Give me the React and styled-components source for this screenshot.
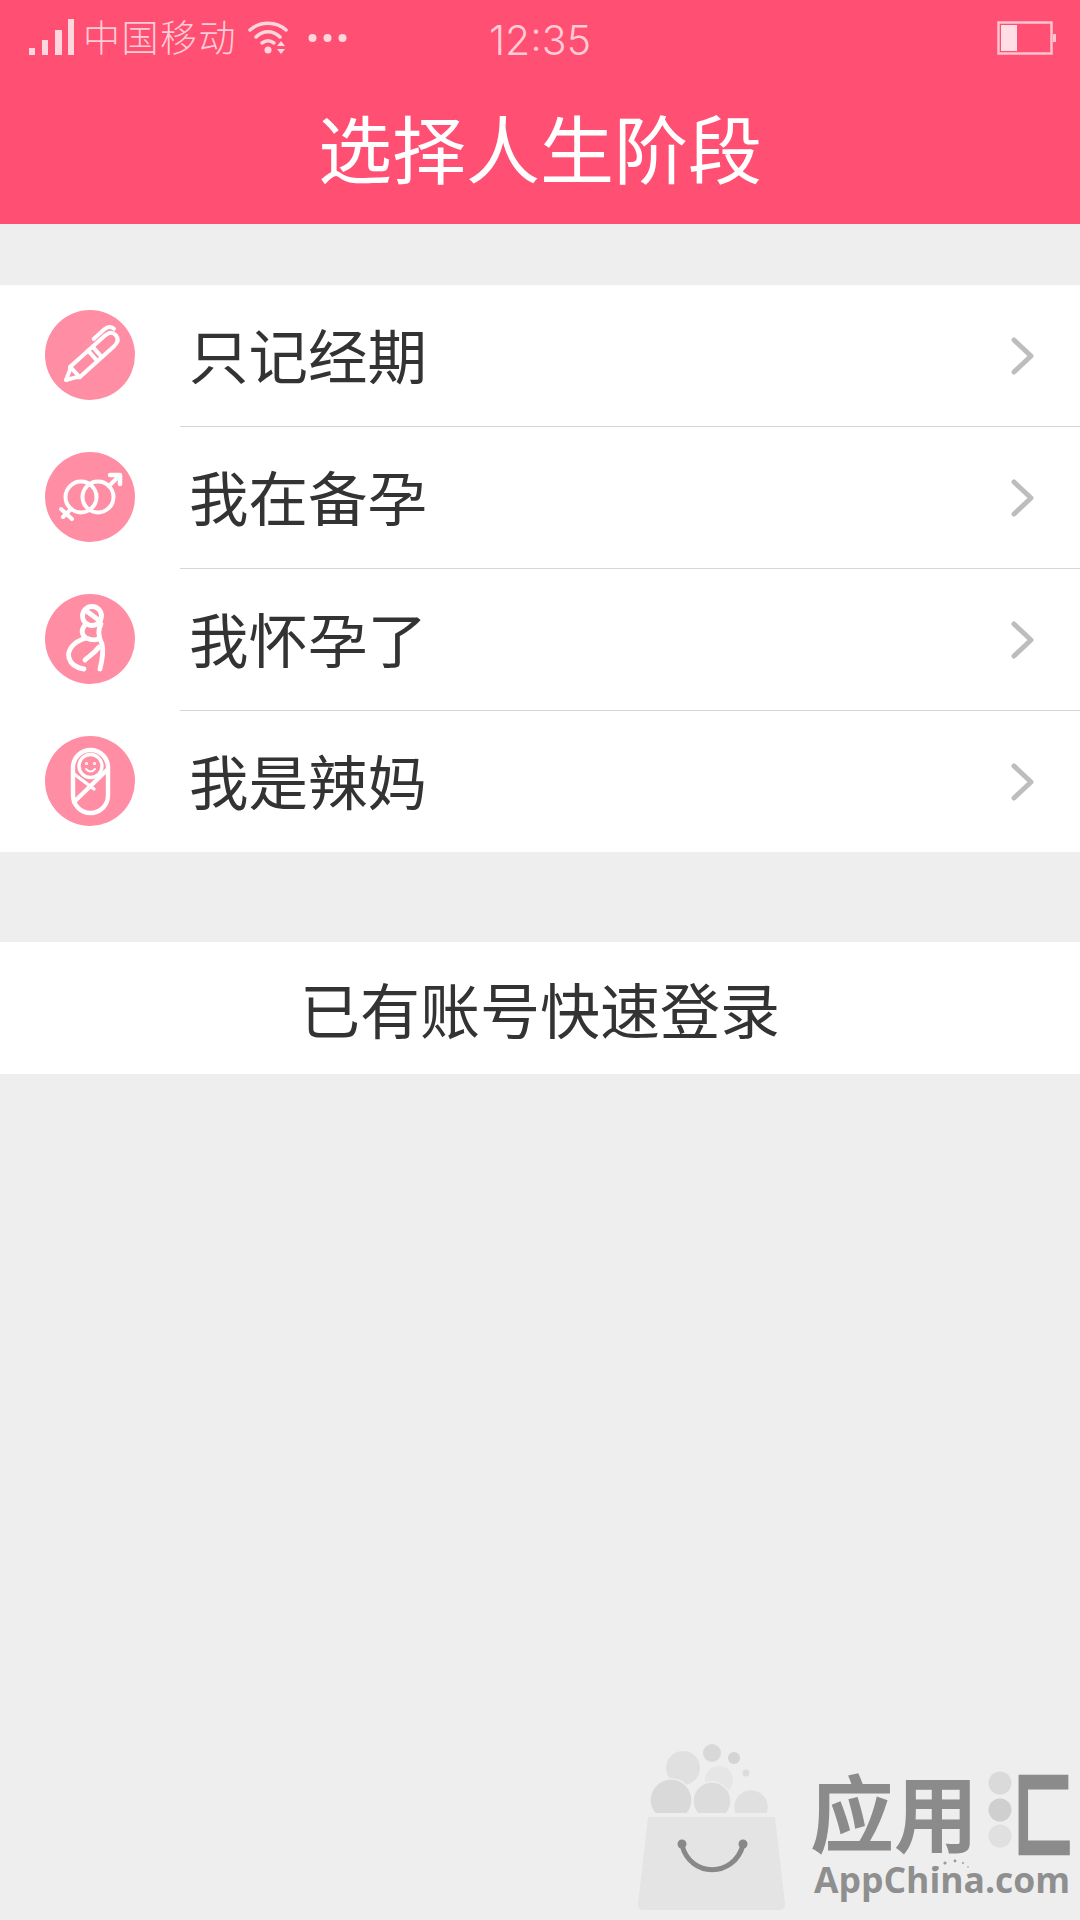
import React from 'react';
import styled, { createGlobalStyle } from 'styled-components';

const CJK = '"Noto Sans CJK SC", "Noto Sans", sans-serif';

const Global = createGlobalStyle`
  html, body { margin: 0; padding: 0; background: #eeeeee; }
  * { box-sizing: border-box; }
`;

const Page = styled.div`
  position: relative;
  width: 1080px;
  height: 1920px;
  overflow: hidden;
  background: #eeeeee;
  font-family: ${CJK};
  color: #333333;
`;

const Header = styled.header`
  height: 224px;
  background: #ff4f72;
  display: flex;
  flex-direction: column;
`;

const StatusBar = styled.div`
  position: relative;
  height: 76px;
  display: flex;
  align-items: center;
  padding-left: 28px;
  color: #ffcbd6;
`;

const Carrier = styled.span`
  margin-left: 8px;
  font-size: 37px;
  font-weight: 300;
  line-height: 1;
  letter-spacing: 1.5px;
  position: relative;
  top: -2px;
`;

const Wifi = styled.svg`
  margin-left: 10px;
  display: block;
`;

const Dots = styled.svg`
  margin-left: 17px;
  display: block;
`;

const Clock = styled.span`
  position: absolute;
  left: 0;
  right: 0;
  top: 15px;
  text-align: center;
  font-family: Inter, "Liberation Sans", sans-serif;
  font-weight: 300;
  font-size: 41px;
  line-height: 50px;
`;

const Battery = styled.svg`
  margin-left: auto;
  margin-right: 23px;
  display: block;
`;

const Title = styled.h1`
  margin: 0;
  flex: 1;
  display: flex;
  align-items: center;
  justify-content: center;
  color: #ffffff;
  font-size: 74px;
  font-weight: 400;
  line-height: 1;
  padding-bottom: 8px;
`;

const List = styled.ul`
  list-style: none;
  margin: 61px 0 0;
  padding: 0;
  background: #ffffff;
`;

const Row = styled.li`
  height: 142px;
  display: flex;
  align-items: center;
  padding-left: 45px;
  padding-right: 45px;
  position: relative;
  &:last-child { height: 141px; }
  &:not(:last-child)::after {
    content: '';
    position: absolute;
    left: 180px;
    right: 0;
    bottom: 0;
    height: 1px;
    background: #d6d6d6;
  }
`;

const Badge = styled.span`
  width: 90px;
  height: 90px;
  border-radius: 50%;
  background: #ff8da3;
  flex: none;
  display: block;
  margin-bottom: 2px;
`;

const Label = styled.span`
  margin-left: 54px;
  margin-bottom: 4px;
  font-size: 59.5px;
  font-weight: 400;
  line-height: 1;
  flex: 1;
`;

const Login = styled.div`
  margin-top: 90px;
  height: 132px;
  background: #ffffff;
  display: flex;
  align-items: center;
  justify-content: center;
  font-size: 60px;
  font-weight: 400;
  line-height: 1;
`;

const Watermark = styled.div`
  position: absolute;
  left: 630px;
  top: 1738px;
  width: 450px;
  height: 182px;
`;

const Bag = styled.svg`
  position: absolute;
  left: 0;
  top: 0;
`;

const Brand = styled.div`
  position: absolute;
  left: 180px;
  top: 27px;
  display: flex;
  align-items: center;
  color: #8b8b8b;
  font-weight: 700;
  font-size: 84px;
  line-height: 90px;
  white-space: nowrap;
`;

const BrandDots = styled.svg`
  display: block;
  margin: 0 2px 0 10px;
`;

const BrandEnd = styled.span`
  display: block;
  width: 50px;
  transform: scale(0.7, 1.1);
  transform-origin: left center;
  -webkit-text-stroke: 4px #8b8b8b;
`;

const BrandLatin = styled.div`
  position: absolute;
  left: 184px;
  top: 119px;
  font-family: "Open Sans", "Liberation Sans", sans-serif;
  font-weight: 700;
  font-size: 35.5px;
  line-height: 44px;
  color: #8f8f8f;
  white-space: nowrap;
`;

const IconSvg = ({ children, weight = 4 }) => (
  <svg width="90" height="90" viewBox="0 0 90 90" fill="none" stroke="#fff" strokeWidth={weight} strokeLinecap="round" strokeLinejoin="round">
    {children}
  </svg>
);

const PenIcon = () => (
  <IconSvg>
    <g transform="translate(21 70) rotate(-42)">
      <path d="M0 0 L9 -4.5 L12 -7 L12 7 L9 4.5 Z" />
      <path d="M12 -7 H58 Q67 -7 67 0 Q67 7 58 7 H12" />
      <path d="M36 -7 V7" />
      <path d="M42 -7 V7" />
      <path d="M48 -12 H62 Q69 -12 70 -6" />
    </g>
  </IconSvg>
);

const GenderIcon = () => (
  <IconSvg>
    <circle cx="36" cy="45" r="15.5" />
    <circle cx="53" cy="45" r="15.5" />
    <path d="M64 34 L74 24" />
    <path d="M65 23 H75 V32" strokeWidth="4.5" />
    <path d="M26 57 L18 65" />
    <path d="M16 57 L27 67" />
  </IconSvg>
);

const MotherIcon = () => (
  <IconSvg weight={4.8}>
    <circle cx="47" cy="22" r="9.5" />
    <path d="M40 16 L55 27" />
    <path d="M40 31 C36 36 36 40 41 44 C28 48 22 56 24 64 C26 71 32 74 39 75" />
    <path d="M56 30 C52 37 54 44 57 50 C59 58 57 67 55 75" />
    <path d="M41 44 C46 46 51 47 54 44" />
    <path d="M54 53 C49 60 44 62 40 66" />
  </IconSvg>
);

const BabyIcon = () => (
  <IconSvg weight={4.4}>
    <rect x="28" y="14" width="35" height="63" rx="17.5" />
    <circle cx="45.5" cy="30" r="11.5" strokeWidth="3.4" />
    <path d="M29 66 L62 34" />
    <path d="M29 38 L49 53" strokeWidth="3.4" />
    <path d="M41 33 Q45.5 38 50 33" strokeWidth="2" />
    <circle cx="41.5" cy="27.5" r="0.6" strokeWidth="2" />
    <circle cx="49.5" cy="27.5" r="0.6" strokeWidth="2" />
  </IconSvg>
);

const Chevron = () => (
  <svg width="24" height="40" viewBox="0 0 24 40" fill="none" stroke="#bdbdbd" strokeWidth="5" strokeLinecap="round" strokeLinejoin="round">
    <path d="M3 4 L20 20 L3 36" />
  </svg>
);

const rows = [
  { label: '只记经期', Icon: PenIcon },
  { label: '我在备孕', Icon: GenderIcon },
  { label: '我怀孕了', Icon: MotherIcon },
  { label: '我是辣妈', Icon: BabyIcon },
];

export default function App() {
  return (
    <Page>
      <Global />
      <Header>
        <StatusBar>
          <svg width="47" height="40" viewBox="0 0 47 40" fill="#ffd5de">
            <rect x="1" y="30" width="6" height="7" />
            <rect x="14" y="22" width="6" height="15" />
            <rect x="27" y="12" width="7" height="25" />
            <rect x="40" y="1" width="6" height="36" />
          </svg>
          <Carrier>中国移动</Carrier>
          <Wifi width="44" height="38" viewBox="0 0 44 38" fill="none" stroke="#ffd5de" strokeWidth="3.5" strokeLinecap="round">
            <path d="M3 11 C13 2 29 2 39 11" />
            <path d="M9 18 C16 11 26 11 33 18" />
            <path d="M15 24 C19 21 23 21 27 24" />
            <circle cx="21" cy="31" r="3.5" fill="#ffd5de" stroke="none" />
            <path d="M30 27 L38 27 L34 22 Z M30 30 L38 30 L34 35 Z" fill="#ffd5de" stroke="none" />
          </Wifi>
          <Dots width="40" height="10" viewBox="0 0 40 10" fill="#ffd5de">
            <circle cx="4.5" cy="5" r="4" />
            <circle cx="19.5" cy="5" r="4" />
            <circle cx="34.5" cy="5" r="4" />
          </Dots>
          <Clock>12:35</Clock>
          <Battery width="60" height="34" viewBox="0 0 60 34" fill="none">
            <rect x="1.5" y="1.5" width="53" height="31" stroke="#ffc4d0" strokeWidth="2.5" />
            <rect x="4" y="4" width="16" height="26" fill="#ffdfe5" />
            <rect x="56" y="13" width="3" height="8" fill="#ffc4d0" />
          </Battery>
        </StatusBar>
        <Title>选择人生阶段</Title>
      </Header>

      <List>
        {rows.map(({ label, Icon }) => (
          <Row key={label}>
            <Badge><Icon /></Badge>
            <Label>{label}</Label>
            <Chevron />
          </Row>
        ))}
      </List>

      <Login>已有账号快速登录</Login>

      <Watermark>
        <Bag width="450" height="182" viewBox="0 0 450 182">
          <circle cx="53" cy="30" r="17" fill="#e0e0e0" />
          <circle cx="82" cy="15" r="9" fill="#d8d8d8" />
          <circle cx="104" cy="20" r="6" fill="#d4d4d4" />
          <circle cx="116" cy="35" r="3.5" fill="#dcdcdc" />
          <circle cx="89" cy="42" r="14" fill="#e6e6e6" />
          <circle cx="41" cy="62" r="21" fill="#d9d9d9" stroke="#eeeeee" strokeWidth="1.5" />
          <circle cx="82" cy="63" r="19" fill="#dcdcdc" stroke="#eeeeee" strokeWidth="1.5" />
          <circle cx="121" cy="69" r="17.5" fill="#e0e0e0" stroke="#eeeeee" strokeWidth="1.5" />
          <rect x="0" y="75" width="170" height="10" fill="#eeeeee" />
          <path d="M18 79 H145 L155 166 Q155 172 149 172 H14 Q8 172 8 166 Z" fill="#e4e4e4" />
          <path d="M52 107 C60 140 104 140 113 107" fill="none" stroke="#888" strokeWidth="5" strokeLinecap="round" />
          <circle cx="52" cy="106" r="4.5" fill="#888" />
          <circle cx="113" cy="106" r="4.5" fill="#888" />
          <g fill="#9a9a9a">
            <circle cx="307" cy="130" r="2" />
            <circle cx="315" cy="125" r="1.6" />
            <circle cx="325" cy="123" r="1.4" />
            <circle cx="333" cy="125" r="1" />
            <circle cx="338" cy="129" r="0.8" />
          </g>
        </Bag>
        <Brand>
          应用
          <BrandDots width="24" height="80" viewBox="0 0 24 80">
            <circle cx="12" cy="13" r="11.5" fill="#dadada" />
            <circle cx="12" cy="40" r="11.5" fill="#cfcfcf" />
            <circle cx="12" cy="66" r="11.5" fill="#e0e0e0" />
          </BrandDots>
          <BrandEnd>匚</BrandEnd>
        </Brand>
        <BrandLatin>AppChina.com</BrandLatin>
      </Watermark>
    </Page>
  );
}
